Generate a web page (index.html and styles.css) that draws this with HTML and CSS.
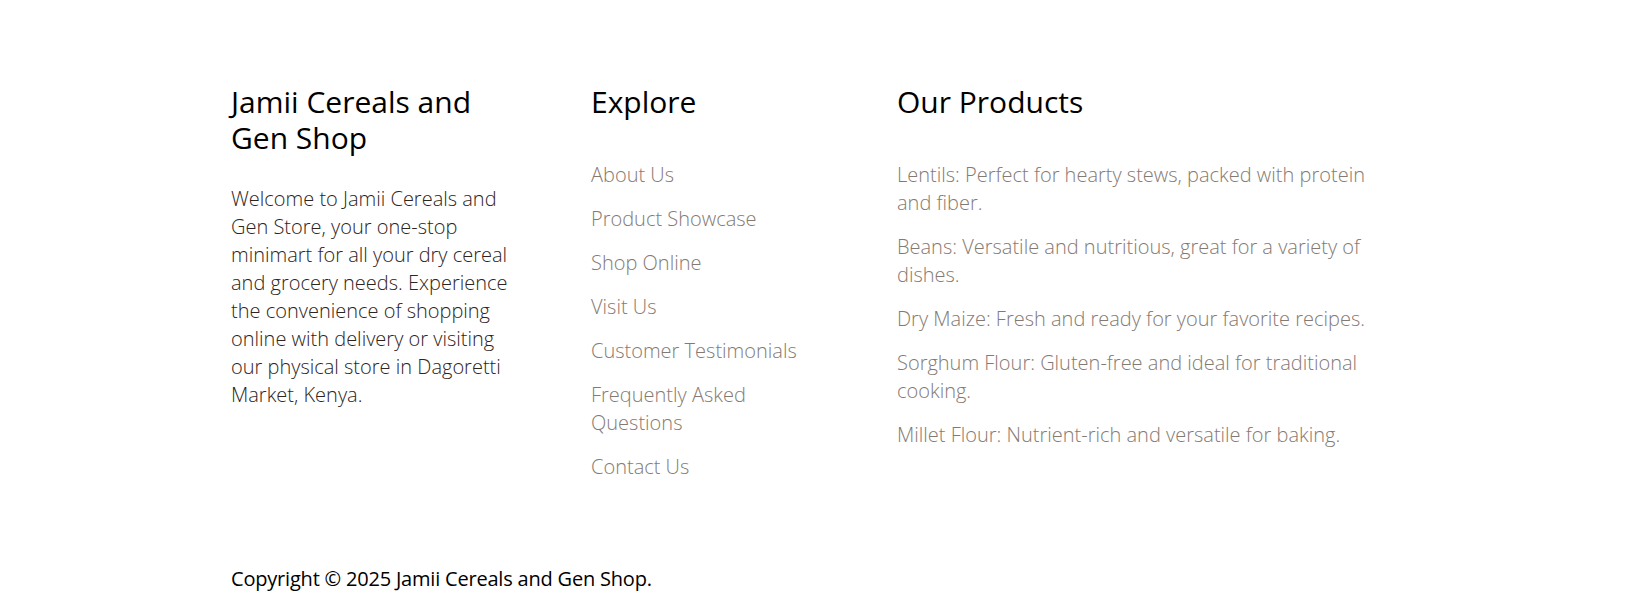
FILE: index.html
```html
<!DOCTYPE html>
<html lang="en">
<head>
<meta charset="utf-8">
<title>Jamii Cereals and Gen Shop</title>
<link rel="stylesheet" href="styles.css">
</head>
<body>
<footer class="footer">
  <div class="container">
    <div class="cols">
      <section class="col col-about">
        <h3 class="col-title">Jamii Cereals and Gen Shop</h3>
        <p class="about-text">Welcome to Jamii Cereals and Gen Store, your one-stop minimart for all your dry cereal and grocery needs. Experience the convenience of shopping online with delivery or visiting our physical store in Dagoretti Market, Kenya.</p>
      </section>
      <section class="col col-explore">
        <h3 class="col-title">Explore</h3>
        <ul class="list">
          <li><a href="#" class="link">About Us</a></li>
          <li><a href="#" class="link">Product Showcase</a></li>
          <li><a href="#" class="link">Shop Online</a></li>
          <li><a href="#" class="link">Visit Us</a></li>
          <li><a href="#" class="link">Customer Testimonials</a></li>
          <li><a href="#" class="link">Frequently Asked Questions</a></li>
          <li><a href="#" class="link">Contact Us</a></li>
        </ul>
      </section>
      <section class="col col-products">
        <h3 class="col-title">Our Products</h3>
        <ul class="list">
          <li>Lentils: Perfect for hearty stews, packed with protein and fiber.</li>
          <li>Beans: Versatile and nutritious, great for a variety of dishes.</li>
          <li>Dry Maize: Fresh and ready for your favorite recipes.</li>
          <li>Sorghum Flour: Gluten-free and ideal for traditional cooking.</li>
          <li>Millet Flour: Nutrient-rich and versatile for baking.</li>
        </ul>
      </section>
    </div>
    <p class="copyright">Copyright © 2025 Jamii Cereals and Gen Shop.</p>
  </div>
</footer>
</body>
</html>
```

FILE: styles.css
```css
* { box-sizing: border-box; }
html, body { margin: 0; padding: 0; background: #fff; }
body {
  font-family: "Open Sans", "Noto Sans", sans-serif;
  color: #000;
}
.footer { padding: 84px 0 0; }
.container { width: 1176px; margin: 0 auto; }
.cols {
  display: grid;
  grid-template-columns: 280px 226px 480px;
  column-gap: 80px;
}
.col-title {
  margin: 0;
  font-size: 30px;
  line-height: 36px;
  font-weight: 500;
  color: #000;
}
.about-text {
  margin: 29px 0 0;
  font-size: 20px;
  line-height: 28px;
  font-weight: 300;
  color: #2e2420;
}
.list {
  list-style: none;
  margin: 41px 0 0;
  padding: 0;
}
.list li {
  font-size: 20px;
  line-height: 28px;
  font-weight: 300;
  color: #857a72;
  margin-bottom: 16px;
}
.link { color: #857a72; text-decoration: none; }
.copyright {
  margin: 68px 0 0;
  font-size: 20px;
  line-height: 28px;
  letter-spacing: -0.2px;
  color: #000;
}
```
